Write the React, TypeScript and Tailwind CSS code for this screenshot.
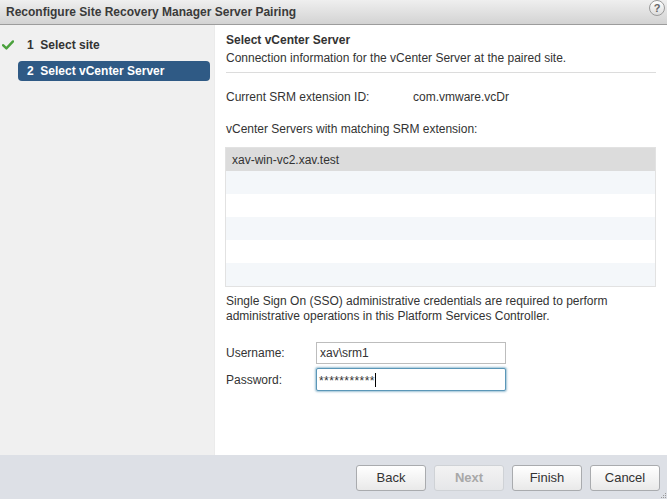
import React from "react";

const rows = ["xav-win-vc2.xav.test", "", "", "", "", ""];

function HelpIcon() {
  return (
    <div className="w-[16px] h-[16px] rounded-full border border-[#9a9a9a] bg-gradient-to-b from-white to-[#dcdcdc] flex items-center justify-center text-[11px] font-bold text-[#666] leading-none">
      ?
    </div>
  );
}

function Check() {
  return (
    <svg width="12" height="10" viewBox="0 0 12 10">
      <path d="M1 5.2 L4.4 8.4 L11 1.4" fill="none" stroke="#4aa13c" strokeWidth="2.4" strokeLinecap="round" strokeLinejoin="round" />
    </svg>
  );
}

function WizButton({ label, disabled }: { label: string; disabled?: boolean }) {
  return (
    <button
      className={`w-[70px] h-[26px] rounded-[3px] border text-[13px] bg-gradient-to-b ${
        disabled
          ? "border-[#cfd2d6] from-[#f3f3f3] to-[#e6e7e9] text-[#a8a8a8] font-bold"
          : "border-[#a9abae] from-white to-[#e9e9e9] text-[#333]"
      }`}
    >
      {label}
    </button>
  );
}

export default function App() {
  return (
    <div className="w-[667px] h-[499px] flex flex-col overflow-hidden font-['Liberation_Sans',Arial,sans-serif] text-[12px] text-[#333] bg-white">
      {/* title bar */}
      <div className="h-[25px] shrink-0 flex items-center justify-between pl-[6px] pr-[2px] border-b border-[#9c9c9c] bg-gradient-to-b from-[#efefef] to-[#d3d3d3]">
        <span className="font-bold text-[#3a3a3a] text-[12px]">
          Reconfigure Site Recovery Manager Server Pairing
        </span>
        <div className="self-start">
          <HelpIcon />
        </div>
      </div>

      <div className="flex flex-1 min-h-0">
        {/* steps */}
        <div className="w-[215px] shrink-0 bg-[#f0f0f0] border-r border-[#ebebeb] pt-[10px]">
          <div className="flex items-center h-[19px]">
            <div className="w-[27px] pl-[2px] flex items-center">
              <Check />
            </div>
            <span className="font-bold text-[#333]">1&nbsp;&nbsp;Select site</span>
          </div>
          <div className="ml-[18px] mr-[4px] mt-[7px] h-[20px] rounded-[4px] bg-[#2f5a85] flex items-center pl-[9px] font-bold text-white">
            2&nbsp;&nbsp;Select vCenter Server
          </div>
        </div>

        {/* content */}
        <div className="flex-1 pl-[11px] pr-[11px] pt-[7px]">
          <div className="font-bold leading-[17px]">Select vCenter Server</div>
          <div className="leading-[17px] mt-[1px]">
            Connection information for the vCenter Server at the paired site.
          </div>
          <div className="mt-[5px] border-t border-[#dcdcdc]" />

          <div className="flex mt-[17px] leading-[15px]">
            <span className="w-[187px]">Current SRM extension ID:</span>
            <span>com.vmware.vcDr</span>
          </div>

          <div className="mt-[17px] leading-[15px]">
            vCenter Servers with matching SRM extension:
          </div>

          <div className="mt-[10px] -ml-[1px] border border-[#e2e2e2]">
            {rows.map((r, i) => (
              <div
                key={i}
                className={`h-[23px] flex items-center pl-[6px] ${
                  i === 0 ? "bg-[#dcdcdc]" : i % 2 === 1 ? "bg-[#f4f7fa]" : "bg-white"
                }`}
              >
                {r}
              </div>
            ))}
          </div>

          <div className="mt-[7px] leading-[15px]">
            Single Sign On (SSO) administrative credentials are required to perform
            <br />
            administrative operations in this Platform Services Controller.
          </div>

          <div className="mt-[18px] flex items-center">
            <span className="w-[90px]">Username:</span>
            <div className="w-[190px] h-[22px] border border-[#bdbdbd] bg-white flex items-center pl-[3px]">
              xav\srm1
            </div>
          </div>
          <div className="mt-[4px] flex items-center">
            <span className="w-[90px]">Password:</span>
            <div className="w-[190px] h-[23px] border border-[#5b97b8] rounded-[2px] shadow-[0_0_2px_1px_rgba(91,151,184,0.6)] bg-white flex items-center pl-[2px]">
              <span className="text-[12px] tracking-[0.4px] pt-[2px]">***********</span>
              <span className="w-[1px] h-[14px] bg-black" />
            </div>
          </div>
        </div>
      </div>

      {/* footer */}
      <div className="h-[44px] shrink-0 bg-[#dde0e6] flex items-center justify-end gap-[8px] pr-[7px] pt-[2px] relative">
        <WizButton label="Back" />
        <WizButton label="Next" disabled />
        <WizButton label="Finish" />
        <WizButton label="Cancel" />
        <div className="absolute right-[1px] bottom-[1px] grid grid-cols-3 gap-[1px]">
          {[0, 1, 2, 3, 4, 5, 6, 7, 8].map((d) => (
            <span
              key={d}
              className={`w-[1px] h-[1px] ${[2, 4, 5, 6, 7, 8].includes(d) ? "bg-[#9a9a9a]" : "bg-transparent"}`}
            />
          ))}
        </div>
      </div>
    </div>
  );
}
